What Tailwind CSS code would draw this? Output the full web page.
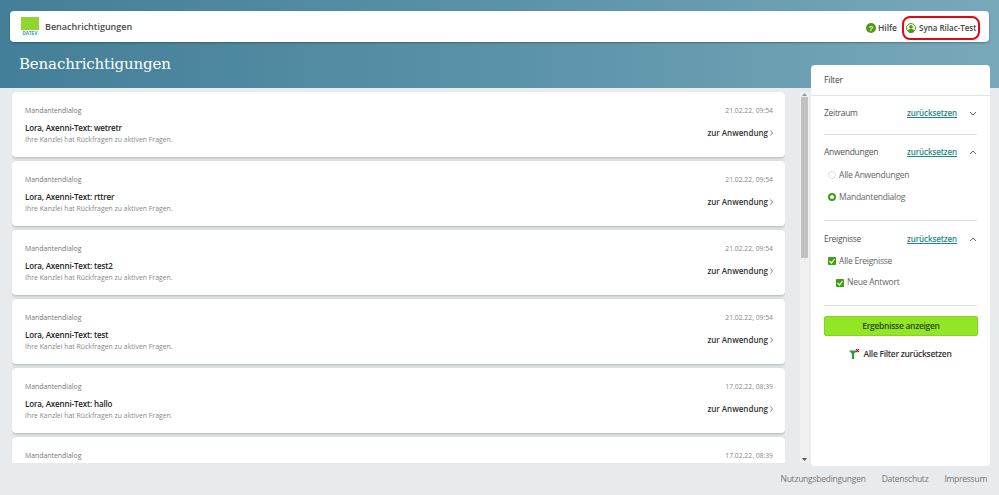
<!DOCTYPE html>
<html lang="de"><head><meta charset="utf-8"><title>Benachrichtigungen</title>
<script src="https://cdn.jsdelivr.net/npm/@tailwindcss/browser@4"></script></head>
<body class="m-0 bg-[#e7ebee] font-['Open_Sans','Noto_Sans',sans-serif] text-[#333]">
<div class="relative h-[495px] w-[999px] overflow-hidden">
  <div class="absolute left-0 top-0 h-[88px] w-full bg-gradient-to-r from-[#437f98] via-[#5a92a8] to-[#78a9ba]"></div>
  <div class="relative flex h-[495px] flex-col">
    <header class="mx-[10px] mt-[11px] flex h-[31px] items-center justify-between rounded-[4px] bg-white pl-[11px] pr-[9px] shadow-[0_1px_2px_rgba(0,0,0,0.3)]">
      <div class="flex items-center gap-[6px]">
        <div class="flex w-[18px] flex-col items-center">
          <div class="h-[13px] w-[18px] bg-[#90d631]"></div>
          <span class="mt-[1px] text-[4.500px] font-bold leading-[5px] text-[#1c9a9e] font-['Liberation_Sans']">DATEV</span>
        </div>
        <span class="text-[9px] font-semibold text-[#4a4a4a]">Benachrichtigungen</span>
      </div>
      <div class="mt-[3px] flex items-center gap-[5px]">
        <div class="flex items-center gap-[2px]">
          <svg width="10" height="10" viewBox="0 0 10 10"><circle cx="5" cy="5" r="5" fill="#4f9a12"/><text x="5" y="8" text-anchor="middle" font-size="8" font-weight="700" fill="#fff" font-family="Liberation Sans">?</text></svg>
          <span class="text-[8.500px] font-semibold text-[#444]">Hilfe</span>
        </div>
        <div class="flex h-[24px] w-[78px] items-center gap-[3px] rounded-[8px] border-2 border-[#e30613] pl-[2px]">
          <svg width="10" height="10" viewBox="0 0 10 10"><circle cx="5" cy="5" r="4.500" fill="#fff" stroke="#4f9a12"/><circle cx="5" cy="3.800" r="1.900" fill="#4f9a12"/><path d="M1.800 8.400c.5-2 1.700-2.600 3.200-2.600s2.700.6 3.200 2.600A4.500 4.500 0 0 1 1.800 8.400z" fill="#4f9a12"/></svg>
          <span class="text-[8px] font-semibold whitespace-nowrap text-[#444]">Syna Rilac-Test</span>
        </div>
      </div>
    </header>
    <h1 class="ml-[19px] mt-[11px] h-[24px] text-[15px] font-normal leading-[23px] tracking-[-0.15px] text-white font-['DejaVu_Serif',serif]">Benachrichtigungen</h1>
    <div class="flex min-h-0 flex-1 items-start pl-[12px] pr-[9px]">
      <div class="mt-[15px] h-[371px] w-[773px] shrink-0 overflow-hidden">
        <div class="flex flex-col gap-[4px]">
          <article class="flex h-[65px] justify-between rounded-[4px] bg-white pl-[13px] pr-[12px] shadow-[0_1px_3px_rgba(0,0,0,0.25)]">
            <div><p class="mt-[13px] text-[6.900px] leading-[11px] text-[#777]">Mandantendialog</p><p class="mt-[6px] text-[8px] font-semibold leading-[12px] tracking-[-0.15px] text-[#222]">Lora, Axenni-Text: wetretr</p><p class="mt-[1px] text-[6.900px] leading-[10px] text-[#888]">Ihre Kanzlei hat Rückfragen zu aktiven Fragen.</p></div>
            <div class="flex flex-col items-end"><p class="mt-[13px] text-[6.800px] leading-[11px] text-[#888]">21.02.22, 09:54</p><p class="mt-[11px] flex items-center gap-[2px] text-[8px] font-semibold leading-[12px] text-[#333]">zur Anwendung <svg width="3" height="6" viewBox="0 0 3 6"><path d="M.5.5 2.500 3 .5 5.500" fill="none" stroke="#666" stroke-width=".8"/></svg></p></div>
          </article>
          <article class="flex h-[65px] justify-between rounded-[4px] bg-white pl-[13px] pr-[12px] shadow-[0_1px_3px_rgba(0,0,0,0.25)]">
            <div><p class="mt-[13px] text-[6.900px] leading-[11px] text-[#777]">Mandantendialog</p><p class="mt-[6px] text-[8px] font-semibold leading-[12px] tracking-[-0.15px] text-[#222]">Lora, Axenni-Text: rttrer</p><p class="mt-[1px] text-[6.900px] leading-[10px] text-[#888]">Ihre Kanzlei hat Rückfragen zu aktiven Fragen.</p></div>
            <div class="flex flex-col items-end"><p class="mt-[13px] text-[6.800px] leading-[11px] text-[#888]">21.02.22, 09:54</p><p class="mt-[11px] flex items-center gap-[2px] text-[8px] font-semibold leading-[12px] text-[#333]">zur Anwendung <svg width="3" height="6" viewBox="0 0 3 6"><path d="M.5.5 2.500 3 .5 5.500" fill="none" stroke="#666" stroke-width=".8"/></svg></p></div>
          </article>
          <article class="flex h-[65px] justify-between rounded-[4px] bg-white pl-[13px] pr-[12px] shadow-[0_1px_3px_rgba(0,0,0,0.25)]">
            <div><p class="mt-[13px] text-[6.900px] leading-[11px] text-[#777]">Mandantendialog</p><p class="mt-[6px] text-[8px] font-semibold leading-[12px] tracking-[-0.15px] text-[#222]">Lora, Axenni-Text: test2</p><p class="mt-[1px] text-[6.900px] leading-[10px] text-[#888]">Ihre Kanzlei hat Rückfragen zu aktiven Fragen.</p></div>
            <div class="flex flex-col items-end"><p class="mt-[13px] text-[6.800px] leading-[11px] text-[#888]">21.02.22, 09:54</p><p class="mt-[11px] flex items-center gap-[2px] text-[8px] font-semibold leading-[12px] text-[#333]">zur Anwendung <svg width="3" height="6" viewBox="0 0 3 6"><path d="M.5.5 2.500 3 .5 5.500" fill="none" stroke="#666" stroke-width=".8"/></svg></p></div>
          </article>
          <article class="flex h-[65px] justify-between rounded-[4px] bg-white pl-[13px] pr-[12px] shadow-[0_1px_3px_rgba(0,0,0,0.25)]">
            <div><p class="mt-[13px] text-[6.900px] leading-[11px] text-[#777]">Mandantendialog</p><p class="mt-[6px] text-[8px] font-semibold leading-[12px] tracking-[-0.15px] text-[#222]">Lora, Axenni-Text: test</p><p class="mt-[1px] text-[6.900px] leading-[10px] text-[#888]">Ihre Kanzlei hat Rückfragen zu aktiven Fragen.</p></div>
            <div class="flex flex-col items-end"><p class="mt-[13px] text-[6.800px] leading-[11px] text-[#888]">21.02.22, 09:54</p><p class="mt-[11px] flex items-center gap-[2px] text-[8px] font-semibold leading-[12px] text-[#333]">zur Anwendung <svg width="3" height="6" viewBox="0 0 3 6"><path d="M.5.5 2.500 3 .5 5.500" fill="none" stroke="#666" stroke-width=".8"/></svg></p></div>
          </article>
          <article class="flex h-[65px] justify-between rounded-[4px] bg-white pl-[13px] pr-[12px] shadow-[0_1px_3px_rgba(0,0,0,0.25)]">
            <div><p class="mt-[13px] text-[6.900px] leading-[11px] text-[#777]">Mandantendialog</p><p class="mt-[6px] text-[8px] font-semibold leading-[12px] tracking-[-0.15px] text-[#222]">Lora, Axenni-Text: hallo</p><p class="mt-[1px] text-[6.900px] leading-[10px] text-[#888]">Ihre Kanzlei hat Rückfragen zu aktiven Fragen.</p></div>
            <div class="flex flex-col items-end"><p class="mt-[13px] text-[6.800px] leading-[11px] text-[#888]">17.02.22, 08:39</p><p class="mt-[11px] flex items-center gap-[2px] text-[8px] font-semibold leading-[12px] text-[#333]">zur Anwendung <svg width="3" height="6" viewBox="0 0 3 6"><path d="M.5.5 2.500 3 .5 5.500" fill="none" stroke="#666" stroke-width=".8"/></svg></p></div>
          </article>
          <article class="flex h-[65px] justify-between rounded-[4px] bg-white pl-[13px] pr-[12px] shadow-[0_1px_3px_rgba(0,0,0,0.25)]">
            <div><p class="mt-[13px] text-[6.900px] leading-[11px] text-[#777]">Mandantendialog</p></div>
            <div class="flex flex-col items-end"><p class="mt-[13px] text-[6.800px] leading-[11px] text-[#888]">17.02.22, 08:39</p></div>
          </article>
        </div>
      </div>
      <div class="ml-[15px] mt-[15px] flex h-[371px] w-[9px] shrink-0 flex-col items-center bg-[#f0f0f0]">
        <div class="flex h-[5px] items-center"><svg width="5" height="3" viewBox="0 0 5 3"><path d="M0 3 2.500 0 5 3z" fill="#999"/></svg></div>
        <div class="h-[161px] w-[7px] bg-[#c1c1c1]"></div>
        <div class="flex-1"></div>
        <div class="flex h-[7px] items-center"><svg width="5" height="3" viewBox="0 0 5 3"><path d="M0 0h5L2.500 3z" fill="#555"/></svg></div>
      </div>
      <aside class="ml-[2px] mt-[-12px] h-[401px] w-[179px] shrink-0 rounded-[4px] bg-white">
        <div class="flex h-[31px] items-center border-b border-[#e4e4e4] pl-[13px] text-[8.500px] tracking-[-0.2px] text-[#444]">Filter</div>
        <div class="mx-[13px] flex h-[39px] items-center justify-between border-b border-[#ddd] pb-[4px]">
          <span class="text-[8.500px] tracking-[-0.3px] text-[#555]">Zeitraum</span>
          <span class="flex items-center gap-[12px]"><a class="text-[8px] font-semibold tracking-[-0.1px] text-[#1f8a8a] underline">zurücksetzen</a>
          <svg width="8" height="5" viewBox="0 0 8 5"><path d="M1 1l3 3 3-3" fill="none" stroke="#666" stroke-width="1"/></svg></span>
        </div>
        <div class="mx-[13px] h-[86px] border-b border-[#ddd] pt-[5px]">
          <div class="flex h-[24px] items-center justify-between">
            <span class="text-[8.500px] tracking-[-0.3px] text-[#555]">Anwendungen</span>
            <span class="flex items-center gap-[12px]"><a class="text-[8px] font-semibold tracking-[-0.1px] text-[#1f8a8a] underline">zurücksetzen</a>
            <svg width="8" height="5" viewBox="0 0 8 5"><path d="M1 4l3-3 3 3" fill="none" stroke="#666" stroke-width="1"/></svg></span>
          </div>
          <div class="flex h-[22px] items-center gap-[3px] pl-[4px] text-[8.500px] tracking-[-0.23px] text-[#666]"><span class="h-[8px] w-[8px] rounded-full border border-[#ddd] bg-white"></span>Alle Anwendungen</div>
          <div class="flex h-[22px] items-center gap-[3px] pl-[4px] text-[8.500px] tracking-[-0.23px] text-[#666]"><span class="h-[8px] w-[8px] rounded-full border-[2px] border-[#3ba10f] bg-white"></span>Mandantendialog</div>
        </div>
        <div class="mx-[13px] h-[85px] border-b border-[#ddd] pt-[7px]">
          <div class="flex h-[22px] items-center justify-between">
            <span class="text-[8.500px] tracking-[-0.3px] text-[#555]">Ereignisse</span>
            <span class="flex items-center gap-[12px]"><a class="text-[8px] font-semibold tracking-[-0.1px] text-[#1f8a8a] underline">zurücksetzen</a>
            <svg width="8" height="5" viewBox="0 0 8 5"><path d="M1 4l3-3 3 3" fill="none" stroke="#666" stroke-width="1"/></svg></span>
          </div>
          <div class="flex h-[22px] items-center gap-[3px] pl-[4px] text-[8.500px] tracking-[-0.23px] text-[#666]"><svg width="8" height="8" viewBox="0 0 8 8"><rect width="8" height="8" rx="1" fill="#3ba10f"/><path d="M1.500 4l2 2 3-4" fill="none" stroke="#fff" stroke-width="1.200"/></svg>Alle Ereignisse</div>
          <div class="flex h-[21px] items-center gap-[3px] pl-[12px] text-[8.500px] tracking-[-0.23px] text-[#666]"><svg width="8" height="8" viewBox="0 0 8 8"><rect width="8" height="8" rx="1" fill="#3ba10f"/><path d="M1.500 4l2 2 3-4" fill="none" stroke="#fff" stroke-width="1.200"/></svg>Neue Antwort</div>
        </div>
        <button class="mx-[13px] mt-[10px] flex h-[20px] w-[154px] items-center justify-center rounded-[2px] border border-[#86d420] bg-[#93e625] text-[8.500px] font-semibold tracking-[-0.3px] text-[#2c4a12]">Ergebnisse anzeigen</button>
        <div class="mt-[10px] flex h-[16px] items-center justify-center gap-[3px] text-[8.500px] font-semibold tracking-[-0.3px] text-[#333]">
          <svg width="11" height="10" viewBox="0 0 11 10"><path d="M0 1.500h8L5 5v5H3V5z" fill="#2e9b3a"/><path d="M7 0l3 3M10 0 7 3" stroke="#e30613" stroke-width="1.200"/></svg>Alle Filter zurücksetzen
        </div>
      </aside>
    </div>
    <footer class="flex h-[32px] items-center justify-end gap-[16px] pr-[12px] text-[8.500px] tracking-[-0.25px] text-[#777]">
      <span>Nutzungsbedingungen</span><span>Datenschutz</span><span>Impressum</span>
    </footer>
  </div>
</div>
</body></html>
